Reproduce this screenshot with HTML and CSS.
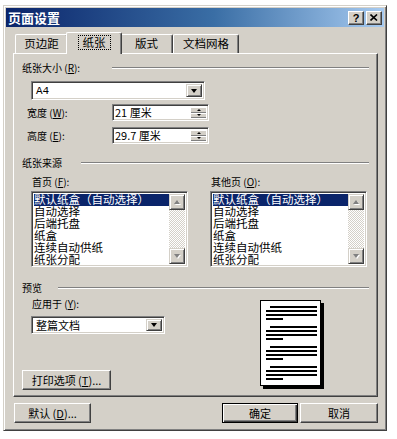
FILE: index.html
```html
<!DOCTYPE html>
<html lang="zh-CN">
<head>
    <meta charset="UTF-8">
    <title>页面设置</title>
    <link rel="stylesheet" href="styles.css">
</head>
<body>
    <div class="dialog">
        <div class="titlebar">
            <span class="title">页面设置</span>
            <div class="caption-btns">
                <span class="cap-btn help">?</span>
                <span class="cap-btn">
                    <svg width="8" height="7" viewBox="0 0 8 7"><path d="M0.5 0.5 L7 6.5 M7 0.5 L0.5 6.5" stroke="#000" stroke-width="1.6" fill="none"/></svg>
                </span>
            </div>
        </div>

        <div class="tabs">
            <div class="tab t1">页边距</div>
            <div class="tab t2 active"><span class="focus">纸张</span></div>
            <div class="tab t3">版式</div>
            <div class="tab t4">文档网格</div>
        </div>

        <div class="panel">
            <div class="group-head h1"><span class="head-text">纸张大小 (<u>R</u>):</span><i class="rule"></i></div>
            <div class="combo size-combo">
                <span class="val latin">A4</span>
                <span class="drop"><i class="tri-down"></i></span>
            </div>
            <div class="field-row r1">
                <span class="field-label">宽度 (<u>W</u>):</span>
                <div class="spin"><span class="val">21 厘米</span><span class="spin-btns"><i class="sbtn"><i class="tri-up-s"></i></i><i class="sbtn"><i class="tri-down-s"></i></i></span></div>
            </div>
            <div class="field-row r2">
                <span class="field-label">高度 (<u>E</u>):</span>
                <div class="spin"><span class="val">29.7 厘米</span><span class="spin-btns"><i class="sbtn"><i class="tri-up-s"></i></i><i class="sbtn"><i class="tri-down-s"></i></i></span></div>
            </div>

            <div class="group-head h2"><span class="head-text">纸张来源</span><i class="rule"></i></div>
            <div class="source-cols">
                <div class="source-col">
                    <div class="list-label">首页 (<u>F</u>):</div>
                    <div class="listbox">
                        <ul class="items">
                            <li class="sel"><span>默认纸盒（自动选择）</span></li>
                            <li><span>自动选择</span></li>
                            <li><span>后端托盘</span></li>
                            <li><span>纸盒</span></li>
                            <li><span>连续自动供纸</span></li>
                            <li><span>纸张分配</span></li>
                        </ul>
                        <div class="vscroll">
                            <span class="arrow"><i class="tri-up-g"></i></span>
                            <span class="track"></span>
                            <span class="arrow"><i class="tri-down-g"></i></span>
                        </div>
                    </div>
                </div>
                <div class="source-col">
                    <div class="list-label">其他页 (<u>O</u>):</div>
                    <div class="listbox">
                        <ul class="items">
                            <li class="sel"><span>默认纸盒（自动选择）</span></li>
                            <li><span>自动选择</span></li>
                            <li><span>后端托盘</span></li>
                            <li><span>纸盒</span></li>
                            <li><span>连续自动供纸</span></li>
                            <li><span>纸张分配</span></li>
                        </ul>
                        <div class="vscroll">
                            <span class="arrow"><i class="tri-up-g"></i></span>
                            <span class="track"></span>
                            <span class="arrow"><i class="tri-down-g"></i></span>
                        </div>
                    </div>
                </div>
            </div>

            <div class="group-head h3"><span class="head-text">预览</span><i class="rule"></i></div>
            <div class="preview">
                <div class="preview-left">
                    <div class="list-label">应用于 (<u>Y</u>):</div>
                    <div class="combo apply-combo">
                        <span class="val">整篇文档</span>
                        <span class="drop"><i class="tri-down"></i></span>
                    </div>
                    <span class="btn print-btn">打印选项 (<u>T</u>)...</span>
                </div>
                <div class="page">
                    <div class="para"><i class="ln first"></i><i class="ln"></i><i class="ln"></i><i class="ln last"></i></div>
                    <div class="para"><i class="ln first"></i><i class="ln"></i><i class="ln"></i><i class="ln last"></i></div>
                    <div class="para"><i class="ln first"></i><i class="ln"></i><i class="ln"></i><i class="ln last"></i></div>
                    <div class="para"><i class="ln first"></i><i class="ln"></i><i class="ln"></i><i class="ln last"></i></div>
                </div>
            </div>
        </div>

        <div class="footer">
            <span class="btn default-btn">默认 (<u>D</u>)...</span>
            <div class="footer-right">
                <span class="btn ok-btn">确定</span>
                <span class="btn cancel-btn">取消</span>
            </div>
        </div>
    </div>
</body>
</html>
```

FILE: styles.css
```css
* {
    box-sizing: border-box;
}
body {
    margin: 0;
    padding: 5px 0 0 3px;
    background: #fff;
    font-family: "Noto Sans CJK SC", "Liberation Sans", sans-serif;
    font-size: 10px;
    color: #000;
}
u {
    text-decoration: underline;
}
.dialog {
    width: 384px;
    height: 426px;
    background: #d4d0c8;
    border: 1px solid;
    border-color: #d4d0c8 #404040 #404040 #d4d0c8;
    box-shadow: inset 1px 1px #fff, inset -1px -1px #808080;
    padding: 2px;
}
.titlebar {
    height: 19px;
    background: linear-gradient(to right, #0a246a, #3a6ea5 55%, #a6caf0);
    display: flex;
    align-items: center;
    justify-content: space-between;
    padding: 0 2px 0 2px;
}
.title {
    color: #fff;
    font-weight: bold;
    font-size: 13px;
    line-height: 19px;
}
.caption-btns {
    display: flex;
    gap: 2px;
}
.cap-btn {
    width: 16px;
    height: 14px;
    background: #d4d0c8;
    border: 1px solid;
    border-color: #fff #404040 #404040 #fff;
    box-shadow: inset -1px -1px #808080;
    display: flex;
    align-items: center;
    justify-content: center;
}
.cap-btn.help {
    font-family: "Liberation Sans", sans-serif;
    font-weight: bold;
    font-size: 11px;
    line-height: 12px;
}

/* tabs */
.tabs {
    display: flex;
    align-items: flex-end;
    height: 21px;
    margin: 5px 0 0 7px;
    padding-left: 2px;
}
.tab {
    height: 19px;
    font-size: 11.5px;
    line-height: 17px;
    text-align: center;
    border: 1px solid;
    border-bottom: none;
    border-color: #fff #404040 #404040 #fff;
    box-shadow: inset -1px 0 #808080;
    border-radius: 2px 2px 0 0;
}
.t1 { width: 53px; }
.t2 { width: 52px; }
.t3 { width: 53px; }
.t4 { width: 66px; }
.tab.active {
    position: relative;
    z-index: 1;
    height: 22px;
    width: 56px;
    margin: 0 -2px -1px;
    background: #d4d0c8;
    line-height: 18px;
}
.focus {
    border: 1px dotted #000;
    padding: 0 4px;
    line-height: 13px;
    display: inline-block;
    margin-top: 2px;
}

/* panel */
.panel {
    width: 365px;
    height: 344px;
    margin-left: 7px;
    border: 1px solid;
    border-color: #fff #404040 #404040 #fff;
    box-shadow: inset -1px -1px #808080;
    padding: 0 8px 0 8px;
}
.group-head {
    display: flex;
    align-items: center;
    height: 14px;
    line-height: 14px;
}
.head-text {
    white-space: nowrap;
}
.rule {
    flex: 1;
    height: 2px;
    border-top: 1px solid #808080;
    border-bottom: 1px solid #fff;
}
.h1 { margin-top: 7px; }
.h2 { margin-top: 12px; }
.h3 { margin-top: 14px; }
.h1 .head-text { width: 90px; }
.h2 .head-text { width: 59px; }
.h3 .head-text { width: 36px; }

.combo, .spin, .listbox {
    background: #fff;
    border: 1px solid;
    border-color: #808080 #fff #fff #808080;
    box-shadow: inset 1px 1px #404040, inset -1px -1px #d4d0c8;
    display: flex;
    align-items: center;
    padding: 2px;
}
.combo .val {
    flex: 1;
    padding-left: 2px;
    font-size: 11px;
}
.latin {
    font-family: "Liberation Mono", monospace;
}
.size-combo {
    width: 174px;
    height: 19px;
    margin: 6px 0 0 9px;
}
.apply-combo {
    width: 134px;
    height: 18px;
    margin: 5px 0 0 9px;
}
.drop {
    width: 16px;
    height: 100%;
    background: #d4d0c8;
    border: 1px solid;
    border-color: #d4d0c8 #404040 #404040 #d4d0c8;
    box-shadow: inset 1px 1px #fff, inset -1px -1px #808080;
    display: flex;
    align-items: center;
    justify-content: center;
}
.tri-down {
    border-left: 3.5px solid transparent;
    border-right: 3.5px solid transparent;
    border-top: 4px solid #000;
}
.field-row {
    display: flex;
    align-items: center;
    height: 17px;
}
.r1 { margin-top: 4px; }
.r2 { margin-top: 6px; }
.field-label {
    width: 85px;
    margin-left: 5px;
}
.spin {
    width: 97px;
    height: 17px;
    padding: 2px 2px 2px 2px;
}
.spin .val {
    flex: 1;
    font-size: 11px;
    line-height: 13px;
}
.spin-btns {
    width: 15px;
    height: 100%;
    display: flex;
    flex-direction: column;
}
.sbtn {
    flex: 1;
    background: #d4d0c8;
    border-top: 1px solid #fff;
    border-bottom: 1px solid #808080;
    display: flex;
    align-items: center;
    justify-content: center;
}
.tri-up-s {
    border-left: 2.5px solid transparent;
    border-right: 2.5px solid transparent;
    border-bottom: 2px solid #000;
}
.tri-down-s {
    border-left: 2.5px solid transparent;
    border-right: 2.5px solid transparent;
    border-top: 2px solid #000;
}

/* paper source lists */
.source-cols {
    display: flex;
    gap: 22px;
    margin: 5px 0 0 9px;
}
.source-col {
    width: 157px;
}
.list-label {
    height: 14px;
    line-height: 14px;
    margin-left: 1px;
}
.listbox {
    margin-top: 2px;
    height: 76px;
    align-items: stretch;
    padding: 2px;
}
.items {
    flex: 1;
    list-style: none;
    margin: 0;
    padding: 0;
    font-size: 11.5px;
}
.items li {
    height: 12px;
    white-space: nowrap;
}
.items li span {
    display: inline-block;
    height: 12px;
    line-height: 11px;
    vertical-align: top;
}
.items li.sel {
    background: #0a246a;
    color: #fff;
}
.vscroll {
    width: 16px;
    display: flex;
    flex-direction: column;
}
.vscroll .arrow {
    height: 16px;
    background: #d4d0c8;
    border: 1px solid;
    border-color: #d4d0c8 #404040 #404040 #d4d0c8;
    box-shadow: inset 1px 1px #fff, inset -1px -1px #808080;
    display: flex;
    align-items: center;
    justify-content: center;
}
.track {
    flex: 1;
    background: repeating-conic-gradient(#fff 0 25%, #d4d0c8 0 50%) 0 0 / 2px 2px;
}
.tri-up-g {
    border-left: 3.5px solid transparent;
    border-right: 3.5px solid transparent;
    border-bottom: 4px solid #808080;
    filter: drop-shadow(1px 1px 0 #fff);
}
.tri-down-g {
    border-left: 3.5px solid transparent;
    border-right: 3.5px solid transparent;
    border-top: 4px solid #808080;
    filter: drop-shadow(1px 1px 0 #fff);
}

/* preview */
.preview {
    display: flex;
    height: 95px;
}
.preview-left {
    width: 238px;
    display: flex;
    flex-direction: column;
}
.preview-left .list-label {
    margin: 2px 0 0 10px;
}
.btn {
    display: flex;
    align-items: center;
    justify-content: center;
    background: #d4d0c8;
    border: 1px solid;
    border-color: #fff #404040 #404040 #fff;
    box-shadow: inset -1px -1px #808080;
    font-size: 11px;
    height: 20px;
}
.print-btn {
    margin-top: auto;
    width: 89px;
}
.page {
    margin-top: 5px;
    width: 61px;
    height: 86px;
    background: #fff;
    border: 1px solid #000;
    box-shadow: 3px 3px 0 #000;
    padding: 5px 3px 0 5px;
}
.para {
    display: flex;
    flex-direction: column;
    gap: 2px;
    margin-bottom: 6px;
}
.ln {
    display: block;
    height: 2px;
    background: #000;
}
.ln.first {
    margin-left: 4px;
}
.ln.last {
    width: 17px;
}

/* footer buttons */
.footer {
    display: flex;
    justify-content: space-between;
    margin: 6px 6px 0 8px;
}
.footer-right {
    display: flex;
    gap: 2px;
}
.default-btn {
    width: 77px;
}
.ok-btn {
    width: 76px;
    border: 1px solid #000;
    box-shadow: inset 1px 1px #fff, inset -1px -1px #404040, inset -2px -2px #808080;
}
.cancel-btn {
    width: 78px;
}
```
